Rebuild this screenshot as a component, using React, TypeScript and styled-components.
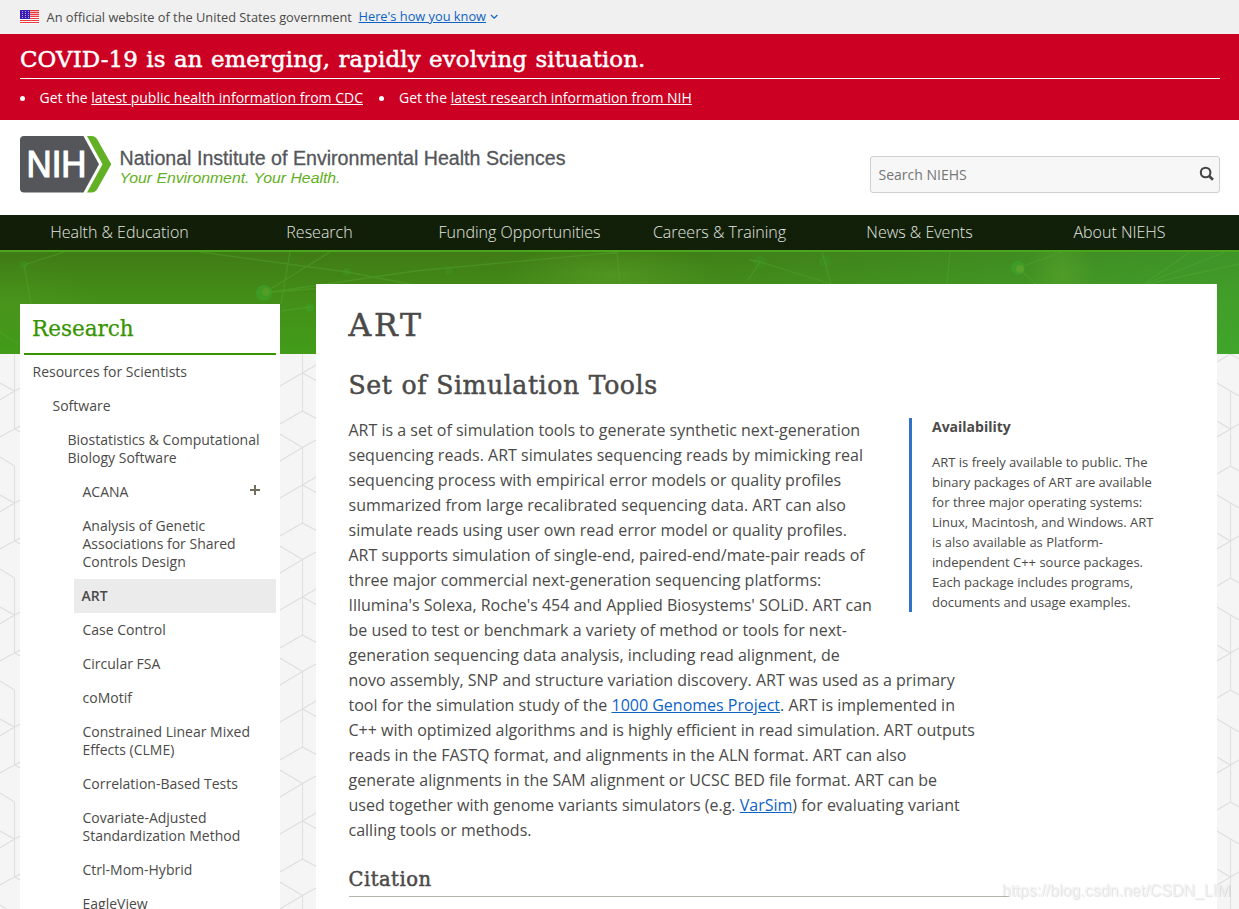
import React from 'react';
import styled, { createGlobalStyle } from 'styled-components';

const sans = "'Open Sans', 'Noto Sans', sans-serif";
const slab = "'DejaVu Serif', serif";

const gutterTile = (width: number, d: string) =>
  `url("data:image/svg+xml,${encodeURIComponent(
    `<svg xmlns='http://www.w3.org/2000/svg' width='${width}' height='112' viewBox='0 0 ${width} 112'><path d='${d}' fill='none' stroke='#dfdfdf' stroke-width='1.1'/></svg>`
  )}")`;

const leftTile = gutterTile(
  20,
  'M14.5 0V75M0 29L14.5 37L20 34M0 46L14.5 37M0 83L14.5 75L20 72M14.5 75L20 78M0 103L14.5 112'
);
const middleTile = gutterTile(
  36,
  'M22.5 0V56.5M22.5 94V112M0 32L36 11M22.5 19L36 26.5M0 70L22.5 57L36 64.5M0 80L22.5 93.5L36 86M0 107L22.5 93.5'
);
const rightTile = gutterTile(
  22,
  'M0 8L13.5 0L22 5M0 29L13.5 37L22 42M13.5 37V112M0 67L13.5 75L22 70M0 83L13.5 75'
);

const GlobalStyle = createGlobalStyle`
  *, *::before, *::after { box-sizing: border-box; }
  html, body { margin: 0; padding: 0; overflow: hidden; }
  body { font-family: ${sans}; color: #4b4a49; background: #f5f5f5; }
`;

const Page = styled.div`
  position: relative;
  width: 1239px;
  height: 909px;
  overflow: hidden;
`;

const GovBanner = styled.div`
  height: 34px;
  padding: 0 20px;
  display: flex;
  align-items: center;
  background: #f0f0f0;
  font-size: 12.8px;
  svg { flex: none; }
`;

const BannerText = styled.span`
  margin: 0 6.6px 0 7.6px;
`;

const Link = styled.a`
  color: #0d63c4;
  text-decoration: underline;
`;

const BannerLink = styled(Link)`
  padding-bottom: 2px;
`;

const Alert = styled.section`
  height: 86px;
  padding: 0 19px 0 20px;
  background: #cc0022;
  color: #fff;
`;

const AlertTitle = styled.h2`
  margin: 0;
  height: 45px;
  padding-top: 10px;
  border-bottom: 1px solid #fff;
  font: 400 22.9px/30px ${slab};
  letter-spacing: 0.1px;
  word-spacing: 1px;
  -webkit-text-stroke: 0.5px #fff;
  white-space: nowrap;
`;

const AlertList = styled.ul`
  margin: 0;
  padding: 9px 0 0;
  display: flex;
  gap: 16.5px;
  list-style: none;
  font-size: 14px;
  line-height: 20px;
`;

const AlertItem = styled.li`
  display: flex;
  align-items: center;
  white-space: pre;
  &::before {
    content: '';
    width: 5px;
    height: 5px;
    margin-right: 14.5px;
    border-radius: 50%;
    background: #fff;
  }
  a { color: #fff; text-decoration: underline; }
`;

const Header = styled.header`
  height: 95px;
  padding: 16px 19px 0 20px;
  display: flex;
  justify-content: space-between;
  align-items: flex-start;
  background: #fff;
`;

const SearchBox = styled.div`
  width: 350px;
  height: 37px;
  margin-top: 20px;
  padding: 0 4px 2px 7.5px;
  display: flex;
  align-items: center;
  justify-content: space-between;
  border: 1px solid #cfcfcf;
  border-radius: 3px;
  background: #f7f7f7;
  color: #757575;
  font-size: 14px;
  line-height: 35px;
  span { padding-top: 2px; }
`;

const Nav = styled.nav`
  height: 37px;
  padding: 0 19.5px;
  display: grid;
  grid-template-columns: repeat(6, 200px);
  background: linear-gradient(90deg, #121e07, #11200a);
  border-bottom: 2px solid #4ca61c;
`;

const NavItem = styled.a`
  text-align: center;
  color: #e4e7e1;
  font-size: 16px;
  font-weight: 300;
  line-height: 34px;
`;

const Body = styled.div`
  display: grid;
  grid-template: 657px / 1239px;
  background-image: ${leftTile}, ${middleTile}, ${rightTile};
  background-repeat: repeat-y;
  background-position: 0 102px, 280px 102px, 1217px 102px;
  background-color: #f5f5f5;
`;

const HeroArt = styled.svg`
  grid-area: 1 / 1;
  display: block;
`;

const Columns = styled.div`
  grid-area: 1 / 1;
  z-index: 1;
  display: grid;
  grid-template-columns: 260px 901px;
  column-gap: 36px;
  padding-left: 20px;
`;

const Sidebar = styled.aside`
  margin-top: 52px;
  padding: 0 4px;
  background: #fff;
  overflow: hidden;
`;

const SideTitle = styled.h2`
  margin: 0;
  height: 51px;
  padding: 10px 8px 0;
  border-bottom: 2px solid #359400;
  color: #359400;
  font: 400 21.5px/30px ${slab};
  -webkit-text-stroke: 0.25px #359400;
`;

const SideItem = styled.div<{ $indent: number; $active?: boolean }>`
  margin-left: ${p => p.$indent}px;
  padding: 8px 14px 8px ${p => (p.$active ? 7.5 : 8.5)}px;
  display: flex;
  justify-content: space-between;
  font-size: 14px;
  line-height: 18px;
  font-weight: ${p => (p.$active ? 600 : 400)};
  background: ${p => (p.$active ? '#ebebeb' : 'transparent')};
  white-space: pre-line;
`;

const Card = styled.main`
  margin-top: 32px;
  padding: 0 0 0 32.5px;
  background: #fff;
  overflow: hidden;
`;

const Title = styled.h1`
  margin: 0;
  padding-top: 21px;
  font: 400 31.5px/40px ${slab};
  letter-spacing: 2.8px;
  -webkit-text-stroke: 0.5px #4b4a49;
`;

const Subtitle = styled.h2`
  margin: 24px 0 0;
  font: 400 25.2px/34px ${slab};
  letter-spacing: 0.55px;
  word-spacing: 0.5px;
  -webkit-text-stroke: 0.5px #4b4a49;
`;

const Article = styled.div`
  display: grid;
  grid-template-columns: 560.5px 260px;
  align-items: start;
  margin-top: 15px;
`;

const Copy = styled.p`
  margin: 0;
  font-size: 16px;
  line-height: 25px;
  white-space: nowrap;
`;

const Availability = styled.aside`
  height: 194px;
  padding-left: 20px;
  border-left: 3px solid #3072c8;
  white-space: nowrap;
  h3 { margin: 0 0 16px; font-size: 14px; line-height: 18px; font-weight: 700; }
  p { margin: 0; font-size: 13px; line-height: 20px; }
`;

const Citation = styled.h3`
  width: 660.5px;
  height: 36px;
  margin: 18px 0 0;
  padding-top: 5px;
  border-bottom: 1px solid #b5b5ac;
  font: 400 19.5px/28px ${slab};
  letter-spacing: 0.5px;
  -webkit-text-stroke: 0.5px #4b4a49;
`;

const Watermark = styled.div`
  position: absolute;
  left: 1002px;
  top: 881px;
  z-index: 2;
  font: 16px/20px 'Liberation Sans', Arial, sans-serif;
  color: rgba(255, 255, 255, 0.75);
  text-shadow: 0 0 1px rgba(0, 0, 0, 0.18), 1px 1px 1px rgba(0, 0, 0, 0.1);
  white-space: nowrap;
`;

const Flag = () => (
  <svg width="19" height="14" viewBox="0 0 19 14" shapeRendering="crispEdges">
    <rect width="19" height="14" fill="#fff" />
    {[0, 2, 4, 6, 8, 10, 12].map(y => (
      <rect key={y} y={y} width="19" height="1" fill="#ea3b40" />
    ))}
    {[1, 3, 5].map(y => (
      <rect key={y} y={y} width="19" height="1" fill="#fbb9b9" />
    ))}
    <rect width="10" height="9" fill="#3a1db5" />
    {[1.5, 4.5, 7.5].map(x =>
      [1, 3, 5, 7].map(y => <rect key={`${x}-${y}`} x={x} y={y} width="1" height="1" fill="#b8a9ec" />)
    )}
  </svg>
);

const Logo = () => (
  <svg width="550" height="58" viewBox="0 0 550 58">
    <path d="M4 0H63.5L79 28.3L63.5 56.6H4Q0 56.6 0 52.6V4Q0 0 4 0Z" fill="#54565a" />
    <path d="M67 0H71.5Q75 0 77 3L91.3 28.3L77 53.6Q75 56.6 71.5 56.6H67L82.5 28.3Z" fill="#62b023" />
    <text x="6.5" y="41.3" fontFamily="'Liberation Sans', Arial, sans-serif" fontSize="36.5" fill="#fff" stroke="#fff" strokeWidth="1.2" textLength="60" lengthAdjust="spacingAndGlyphs">NIH</text>
    <text x="99.5" y="28.5" fontFamily="'Liberation Sans', Arial, sans-serif" fontSize="19.5" fill="#54565a" stroke="#54565a" strokeWidth="0.3" textLength="446" lengthAdjust="spacingAndGlyphs">National Institute of Environmental Health Sciences</text>
    <text x="99.5" y="47" fontFamily="'Liberation Sans', Arial, sans-serif" fontStyle="italic" fontSize="15.5" fill="#62b023" textLength="221" lengthAdjust="spacingAndGlyphs">Your Environment. Your Health.</text>
  </svg>
);

const Hero = () => (
  <HeroArt width="1239" height="102" viewBox="0 0 1239 102">
    <defs>
      <linearGradient id="band" x1="0" y1="0" x2="0" y2="1">
        <stop offset="0" stopColor="#407b15" />
        <stop offset="0.5" stopColor="#439018" />
        <stop offset="1" stopColor="#429c19" />
      </linearGradient>
      <linearGradient id="tint" x1="0" y1="0" x2="1" y2="0">
        <stop offset="0.5" stopColor="#3fae3c" stopOpacity="0" />
        <stop offset="1" stopColor="#3fae3c" stopOpacity="0.5" />
      </linearGradient>
      <radialGradient id="glow">
        <stop offset="0" stopColor="#5fa52c" stopOpacity="0.5" />
        <stop offset="1" stopColor="#5fa52c" stopOpacity="0" />
      </radialGradient>
    </defs>
    <rect width="1239" height="102" fill="url(#band)" />
    <rect width="1239" height="102" fill="url(#tint)" />
    <ellipse cx="610" cy="24" rx="110" ry="34" fill="url(#glow)" />
    <ellipse cx="1062" cy="22" rx="34" ry="45" fill="url(#glow)" />
    <ellipse cx="10" cy="50" rx="90" ry="45" fill="url(#glow)" opacity="0.4" />
    <g stroke="#58aa35" strokeWidth="1.3" opacity="0.38" fill="none">
      <path d="M24 13L31 52M24 13L64 0M290 0L281 52M264 41L330 0M264 41L415 19L620 0M264 41L345 34M200 0L347 20L420 34M281 59L310 55M0 80L18 92M749 8L760 10L831 32M760 10L748 28M822 0L831 32M950 0L947 32M1018 16L1062 0M1018 16L1036 32M1144 32L1190 0M1148 32L1239 12M1144 32L1225 0M620 30L617 0" />
    </g>
    <g fill="#3da62b" opacity="0.6">
      <circle cx="264" cy="41" r="8" />
      <circle cx="310" cy="56" r="4" opacity="0.7" />
      <circle cx="24" cy="13" r="4" opacity="0.4" />
      <circle cx="347" cy="20" r="4" opacity="0.5" />
      <circle cx="449" cy="19" r="4" opacity="0.4" />
      <circle cx="1018" cy="16" r="7" />
      <circle cx="760" cy="10" r="7" opacity="0.3" />
      <circle cx="825" cy="9" r="6" opacity="0.4" />
      <circle cx="1227" cy="91" r="3" />
    </g>
    <circle cx="266" cy="40" r="4" fill="#579d24" opacity="0.8" />
    <circle cx="1020" cy="17" r="4" fill="#63a32d" opacity="0.7" />
  </HeroArt>
);

const navItems = ['Health & Education', 'Research', 'Funding Opportunities', 'Careers & Training', 'News & Events', 'About NIEHS'];

const sideItems: { label: string; indent: number; active?: boolean; plus?: boolean }[] = [
  { label: 'Resources for Scientists', indent: 0 },
  { label: 'Software', indent: 20 },
  { label: 'Biostatistics & Computational\nBiology Software', indent: 35 },
  { label: 'ACANA', indent: 50, plus: true },
  { label: 'Analysis of Genetic\nAssociations for Shared\nControls Design', indent: 50 },
  { label: 'ART', indent: 50, active: true },
  { label: 'Case Control', indent: 50 },
  { label: 'Circular FSA', indent: 50 },
  { label: 'coMotif', indent: 50 },
  { label: 'Constrained Linear Mixed\nEffects (CLME)', indent: 50 },
  { label: 'Correlation-Based Tests', indent: 50 },
  { label: 'Covariate-Adjusted\nStandardization Method', indent: 50 },
  { label: 'Ctrl-Mom-Hybrid', indent: 50 },
  { label: 'EagleView', indent: 50 },
];

export default function App() {
  return (
    <Page>
      <GlobalStyle />
      <GovBanner>
        <Flag />
        <BannerText>An official website of the United States government</BannerText>
        <BannerLink>Here's how you know</BannerLink>
        <svg width="16" height="8" viewBox="0 0 16 8" fill="none" stroke="#0d63c4" strokeWidth="1.2">
          <path d="M5 2L8.2 5.2L11.4 2" />
        </svg>
      </GovBanner>
      <Alert>
        <AlertTitle>COVID-19 is an emerging, rapidly evolving situation.</AlertTitle>
        <AlertList>
          <AlertItem>Get the <a>latest public health information from CDC</a></AlertItem>
          <AlertItem>Get the <a>latest research information from NIH</a></AlertItem>
        </AlertList>
      </Alert>
      <Header>
        <Logo />
        <SearchBox>
          <span>Search NIEHS</span>
          <svg width="16" height="16" viewBox="0 0 16 16" fill="none" stroke="#454545">
            <circle cx="6.6" cy="6.5" r="4.8" strokeWidth="2.1" />
            <path d="M10.1 10L14 13.8" strokeWidth="2.6" />
          </svg>
        </SearchBox>
      </Header>
      <Nav>
        {navItems.map(n => <NavItem key={n}>{n}</NavItem>)}
      </Nav>
      <Body>
        <Hero />
        <Columns>
          <Sidebar>
            <SideTitle>Research</SideTitle>
            {sideItems.map(s => (
              <SideItem key={s.label} $indent={s.indent} $active={s.active}>
                {s.label}
                {s.plus && (
                  <svg width="14" height="14" viewBox="0 0 14 14" stroke="#736b5e" strokeWidth="2">
                    <path d="M7 2V12M2 7H12" />
                  </svg>
                )}
              </SideItem>
            ))}
          </Sidebar>
          <Card>
            <Title>ART</Title>
            <Subtitle>Set of Simulation Tools</Subtitle>
            <Article>
              <Copy>
                ART is a set of simulation tools to generate synthetic next-generation<br />
                sequencing reads. ART simulates sequencing reads by mimicking real<br />
                sequencing process with empirical error models or quality profiles<br />
                summarized from large recalibrated sequencing data. ART can also<br />
                simulate reads using user own read error model or quality profiles.<br />
                ART supports simulation of single-end, paired-end/mate-pair reads of<br />
                three major commercial next-generation sequencing platforms:<br />
                Illumina's Solexa, Roche's 454 and Applied Biosystems' SOLiD. ART can<br />
                be used to test or benchmark a variety of method or tools for next-<br />
                generation sequencing data analysis, including read alignment, de<br />
                novo assembly, SNP and structure variation discovery. ART was used as a primary<br />
                tool for the simulation study of the <Link>1000 Genomes Project</Link>. ART is implemented in<br />
                C++ with optimized algorithms and is highly efficient in read simulation. ART outputs<br />
                reads in the FASTQ format, and alignments in the ALN format. ART can also<br />
                generate alignments in the SAM alignment or UCSC BED file format. ART can be<br />
                used together with genome variants simulators (e.g. <Link>VarSim</Link>) for evaluating variant<br />
                calling tools or methods.
              </Copy>
              <Availability>
                <h3>Availability</h3>
                <p>
                  ART is freely available to public. The<br />
                  binary packages of ART are available<br />
                  for three major operating systems:<br />
                  Linux, Macintosh, and Windows. ART<br />
                  is also available as Platform-<br />
                  independent C++ source packages.<br />
                  Each package includes programs,<br />
                  documents and usage examples.
                </p>
              </Availability>
            </Article>
            <Citation>Citation</Citation>
          </Card>
        </Columns>
      </Body>
      <Watermark>https://blog.csdn.net/CSDN_LIM</Watermark>
    </Page>
  );
}
